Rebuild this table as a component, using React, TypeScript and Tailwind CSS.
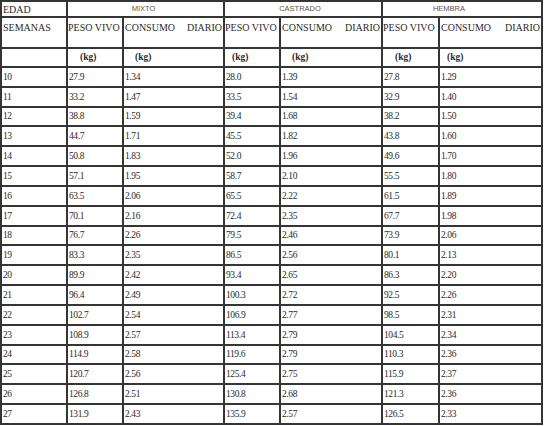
const rows: [string, string, string, string, string, string, string][] = [
  ["10", "27.9", "1.34", "28.0", "1.39", "27.8", "1.29"],
  ["11", "33.2", "1.47", "33.5", "1.54", "32.9", "1.40"],
  ["12", "38.8", "1.59", "39.4", "1.68", "38.2", "1.50"],
  ["13", "44.7", "1.71", "45.5", "1.82", "43.8", "1.60"],
  ["14", "50.8", "1.83", "52.0", "1.96", "49.6", "1.70"],
  ["15", "57.1", "1.95", "58.7", "2.10", "55.5", "1.80"],
  ["16", "63.5", "2.06", "65.5", "2.22", "61.5", "1.89"],
  ["17", "70.1", "2.16", "72.4", "2.35", "67.7", "1.98"],
  ["18", "76.7", "2.26", "79.5", "2.46", "73.9", "2.06"],
  ["19", "83.3", "2.35", "86.5", "2.56", "80.1", "2.13"],
  ["20", "89.9", "2.42", "93.4", "2.65", "86.3", "2.20"],
  ["21", "96.4", "2.49", "100.3", "2.72", "92.5", "2.26"],
  ["22", "102.7", "2.54", "106.9", "2.77", "98.5", "2.31"],
  ["23", "108.9", "2.57", "113.4", "2.79", "104.5", "2.34"],
  ["24", "114.9", "2.58", "119.6", "2.79", "110.3", "2.36"],
  ["25", "120.7", "2.56", "125.4", "2.75", "115.9", "2.37"],
  ["26", "126.8", "2.51", "130.8", "2.68", "121.3", "2.36"],
  ["27", "131.9", "2.43", "135.9", "2.57", "126.5", "2.33"],
]

const serif = "font-[family-name:Liberation_Serif,serif]"
const sans = "font-[family-name:Liberation_Sans,sans-serif]"

function Consumo() {
  return (
    <div className={`bg-white flex justify-between items-start pt-[4px] pl-[1px] pr-[1px] ${serif} text-[10px] leading-[12px] text-[#2a2a2a]`}>
      <span>CONSUMO</span>
      <span>DIARIO</span>
    </div>
  )
}

function Kg({ pad }: { pad: string }) {
  return (
    <div className={`bg-white flex items-center ${pad} ${serif} font-bold text-[9.5px] text-[#2a2a2a]`}>
      (kg)
    </div>
  )
}

export default function App() {
  return (
    <div className="w-[545px] h-[426px] bg-white">
      <div className="grid w-[543px] gap-[2px] p-[2px] bg-[#353535] grid-cols-[64px_54px_99px_54px_100px_55px_101px] grid-rows-[14px_29px_17px_repeat(18,17.83px)]">
        {/* header row 1 */}
        <div className={`bg-white flex items-center pl-[1px] ${serif} text-[10px] text-[#2a2a2a]`}>EDAD</div>
        <div className={`col-span-2 bg-white flex items-center justify-center pr-[4px] ${sans} text-[7.5px] text-[#555]`}>MIXTO</div>
        <div className={`col-span-2 bg-white flex items-center justify-center pr-[6px] ${sans} text-[7.5px] text-[#555]`}>CASTRADO</div>
        <div className={`col-span-2 bg-white flex items-center justify-center pr-[26px] ${sans} text-[7.5px] text-[#555]`}>HEMBRA</div>

        {/* header row 2 */}
        <div className={`bg-white pt-[4px] pl-[1px] ${serif} text-[10px] leading-[12px] text-[#2a2a2a]`}>SEMANAS</div>
        <div className={`bg-white pt-[4px] whitespace-nowrap ${serif} text-[10px] leading-[12px] text-[#2a2a2a]`}>PESO VIVO</div>
        <Consumo />
        <div className={`bg-white pt-[4px] whitespace-nowrap ${serif} text-[10px] leading-[12px] text-[#2a2a2a]`}>PESO VIVO</div>
        <Consumo />
        <div className={`bg-white pt-[4px] whitespace-nowrap ${serif} text-[10px] leading-[12px] text-[#2a2a2a]`}>PESO VIVO</div>
        <Consumo />

        {/* units row */}
        <div className="bg-white" />
        <Kg pad="pl-[12px]" />
        <Kg pad="pl-[11px]" />
        <Kg pad="pl-[7px]" />
        <Kg pad="pl-[11px]" />
        <Kg pad="pl-[12px]" />
        <Kg pad="pl-[7px]" />

        {/* data */}
        {rows.map((r) =>
          r.map((v, i) => (
            <div
              key={r[0] + "-" + i}
              className={`bg-white flex items-center pl-[1px] ${serif} text-[9.5px] tracking-[-0.4px] text-[#2a2a2a]`}
            >
              {v}
            </div>
          ))
        )}
      </div>
    </div>
  )
}
